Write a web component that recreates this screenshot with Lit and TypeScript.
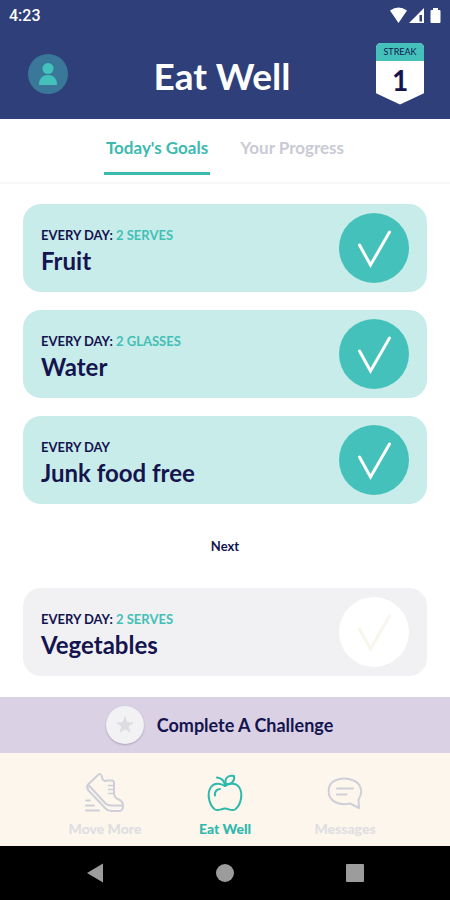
import { LitElement, html, css, svg, nothing } from "lit";
import { customElement, property, state } from "lit/decorators.js";
import { classMap } from "lit/directives/class-map.js";

interface Goal {
  id: string;
  name: string;
  amount?: string;
  done: boolean;
}

const shoeIcon = svg`
  <path d="M13.500 3.500 Q15.500 0.500 17.500 3.500 L18.500 7 Q20 10 23 8.500 L28 8.500 Q30 8.500 30 11 L30 22 Q31 26.500 35 27.500 Q39.500 29.500 39 35 Q38.500 39 35 39 L27.500 39 Q24 39 21.500 36.500 L4.500 18.500 Q2 15.500 4 12.500 Z"/>
  <path d="M4.500 13 L21 31 Q23.500 33.500 27.500 33.500 L38.500 33.500"/>
  <path d="M24.500 13.500h5M24.500 17.500h5M24.500 21.500h5" stroke-width="1.700"/>
  <path d="M2 28.500h4M2 33.500h8M2 38.500h13" stroke-width="1.800"/>`;

const appleIcon = svg`
  <path d="M21 14 C16 10.500 10 11 7 15 C2.500 21.500 5 33 11 37.500 C14.500 39.500 17.500 36.500 21 36.500 C24.500 36.500 27.500 39.500 31 37.500 C37 33 39.500 21.500 35 15 C32 11 26 10.500 21 14 Z"/>
  <path d="M21 14 C20.500 9 17.500 6 13 5.500"/>
  <path d="M21.500 12 C20.500 6 24 3 30 4 C31 9.500 27.500 12.500 21.500 12 Z"/>
  <path d="M11 23.500 C10.500 20 12.500 17.500 16 17"/>`;

const messageIcon = svg`
  <path d="M34.500 27.500 C39.500 20 37 11.500 29.500 8.500 C24 6 16.500 6 11 8.500 C2.500 12.500 2.500 25.500 11 30 C15.500 32.500 21 32.500 26 31.500 L35 36 Z"/>
  <path d="M13 16.500h16M13 22.500h9.500"/>`;

@customElement("goal-card")
export class GoalCard extends LitElement {
  @property({ attribute: false }) goal!: Goal;

  static styles = css`
    :host {
      display: block;
    }
    .card {
      display: flex;
      align-items: center;
      justify-content: space-between;
      height: 88px;
      box-sizing: border-box;
      padding: 0 18px;
      border-radius: 18px;
      background: #f1f1f3;
      color: #14144f;
      cursor: pointer;
    }
    .card.done {
      background: #c8ecea;
    }
    .text {
      display: flex;
      flex-direction: column;
      gap: 4px;
      padding-top: 5px;
    }
    .when {
      font-size: 13px;
      line-height: 16px;
      font-weight: 700;
    }
    .amount {
      color: #43c0b6;
    }
    .name {
      font-size: 24px;
      line-height: 28px;
      font-weight: 700;
    }
    .tick {
      display: grid;
      flex: none;
    }
    .tick > * {
      grid-area: 1 / 1;
    }
    .box {
      appearance: none;
      width: 70px;
      height: 70px;
      margin: 0;
      border-radius: 50%;
      background: #fff;
      cursor: pointer;
    }
    .box:checked {
      background: #45c1bc;
    }
    .mark {
      width: 70px;
      height: 70px;
      pointer-events: none;
      fill: none;
      stroke: #f7f5ec;
      stroke-width: 3;
      stroke-linecap: round;
    }
    .done .mark {
      stroke: #fff;
    }
  `;

  private toggle(e: Event) {
    this.goal = { ...this.goal, done: (e.target as HTMLInputElement).checked };
  }

  render() {
    const { id, name, amount, done } = this.goal;
    return html`
      <label class=${classMap({ card: true, done })} for=${id}>
        <span class="text">
          <span class="when"
            >EVERY DAY${amount ? html`: <span class="amount">${amount}</span>` : nothing}</span
          >
          <span class="name">${name}</span>
        </span>
        <span class="tick">
          <input class="box" type="checkbox" id=${id} .checked=${done} @change=${this.toggle} />
          <svg class="mark" viewBox="0 0 70 70" aria-hidden="true">
            <path d="M20.500 32 L31.500 52 L50.500 19" />
          </svg>
        </span>
      </label>
    `;
  }
}

@customElement("app-root")
export class AppRoot extends LitElement {
  @state() private tab = "Today's Goals";

  private done: Goal[] = [
    { id: "fruit", name: "Fruit", amount: "2 SERVES", done: true },
    { id: "water", name: "Water", amount: "2 GLASSES", done: true },
    { id: "junk", name: "Junk food free", done: true },
  ];

  private next: Goal[] = [
    { id: "vegetables", name: "Vegetables", amount: "2 SERVES", done: false },
  ];

  static styles = css`
    :host {
      display: flex;
      flex-direction: column;
      min-height: 100vh;
      background: #fff;
      color: #14144f;
      font-family: Lato, "Open Sans", sans-serif;
    }
    button {
      border: 0;
      margin: 0;
      padding: 0;
      background: none;
      color: inherit;
      font: inherit;
      cursor: pointer;
    }
    .top {
      background: #2e3f7a;
      color: #fff;
    }
    .status {
      display: flex;
      align-items: center;
      justify-content: space-between;
      height: 30px;
      padding: 0 7px 0 9px;
      font-family: Roboto, sans-serif;
      font-size: 16px;
      font-weight: 500;
    }
    .signals {
      width: 54px;
      height: 18px;
      fill: #fff;
    }
    .bar {
      display: grid;
      grid-template-columns: auto 1fr auto;
      align-items: center;
      height: 89px;
      padding: 0 26px 0 28px;
    }
    .profile {
      width: 40px;
      height: 40px;
      margin-bottom: 2px;
    }
    .profile svg {
      display: block;
    }
    .title {
      margin: 0;
      padding-top: 2px;
      text-align: center;
      font-size: 37px;
      line-height: 44px;
      font-weight: 700;
    }
    .streak {
      display: flex;
      flex-direction: column;
      width: 48px;
      height: 62px;
      margin-bottom: 2px;
      border-radius: 5px 5px 0 0;
      overflow: hidden;
      background: #fff;
      clip-path: polygon(0 0, 100% 0, 100% 82%, 50% 100%, 0 82%);
      color: #14144f;
      text-align: center;
    }
    .streak-label {
      background: #45c1bc;
      font-size: 9px;
      line-height: 18px;
      font-weight: 400;
    }
    .streak-count {
      font-size: 28px;
      line-height: 38px;
      font-weight: 700;
    }
    .tabs {
      display: flex;
      justify-content: center;
      gap: 28px;
      height: 63px;
      border-bottom: 2px solid #f8f8f9;
    }
    .tab {
      height: 56px;
      box-sizing: border-box;
      padding: 0 2px;
      border-bottom: 3px solid transparent;
      font-size: 17px;
      line-height: 57px;
      font-weight: 700;
      color: #c9cad3;
    }
    .tab.current {
      color: #3bbab0;
      border-color: #3bbab0;
    }
    .goals {
      display: flex;
      flex-direction: column;
      gap: 18px;
      padding: 20px 23px 21px;
      flex: 1;
    }
    .next {
      margin: 0;
      padding: 14px 0;
      text-align: center;
      font-size: 13px;
      line-height: 20px;
      font-weight: 700;
    }
    .challenge {
      display: flex;
      align-items: center;
      justify-content: center;
      gap: 13px;
      height: 56px;
      padding-right: 11px;
      background: #dad1e4;
      color: #14144f;
      font-size: 18px;
      font-weight: 700;
    }
    .badge {
      display: grid;
      place-items: center;
      width: 38px;
      height: 38px;
      border-radius: 50%;
      background: #f2f1f4;
      box-shadow: 0 1px 2px #a9a1b5;
    }
    .nav {
      display: grid;
      grid-template-columns: repeat(3, 120px);
      justify-content: center;
      height: 93px;
      background: #fcf6ec;
    }
    .item {
      display: flex;
      flex-direction: column;
      align-items: center;
      gap: 7px;
      padding-top: 19px;
      color: #cfcfda;
      font-size: 14px;
      line-height: 16px;
      font-weight: 900;
      text-decoration: none;
    }
    .item.faint span {
      color: #dfdee2;
    }
    .item.current {
      color: #2fb8ad;
    }
    .item svg {
      width: 42px;
      height: 42px;
      fill: none;
      stroke: currentColor;
      stroke-width: 2;
      stroke-linecap: round;
      stroke-linejoin: round;
    }
    .system {
      display: flex;
      justify-content: space-around;
      align-items: center;
      height: 54px;
      padding: 0 30px;
      background: #000;
    }
    .system svg {
      display: block;
      fill: #9c9c9c;
    }
  `;

  private tabButton(name: string) {
    const current = this.tab === name;
    return html`<button
      class=${classMap({ tab: true, current })}
      role="tab"
      aria-selected=${current}
      @click=${() => (this.tab = name)}
    >${name}</button>`;
  }

  private navItem(label: string, icon: unknown, current = false) {
    return html`<a
      class=${classMap({ item: true, current, faint: !current })}
      href="#"
      aria-current=${current ? "page" : nothing}
    >
      <svg viewBox="0 0 42 42" aria-hidden="true">${icon}</svg>
      <span>${label}</span>
    </a>`;
  }

  render() {
    return html`
      <header class="top">
        <div class="status">
          <span>4:23</span>
          <svg class="signals" viewBox="0 0 54 18" aria-hidden="true">
            <path d="M1 4.500 Q9.500 -1.500 18 4.500 L9.500 17 Z" />
            <path fill-rule="evenodd" d="M35 2 V17 H20 Z M30.500 9 V15.500 H33 V9 Z" />
            <path d="M44 2h5v2h1.500q1 0 1 1v11q0 1-1 1h-8q-1 0-1-1v-11q0-1 1-1h1.500z" />
          </svg>
        </div>
        <div class="bar">
          <button class="profile" aria-label="Profile">
            <svg width="40" height="40" viewBox="0 0 40 40">
              <circle cx="20" cy="20" r="20" fill="#397898" />
              <circle cx="20" cy="14.500" r="5.500" fill="#45c1bc" />
              <path d="M11 31 C11 24 15 21 20 21 C25 21 29 24 29 31 Z" fill="#45c1bc" />
            </svg>
          </button>
          <h1 class="title">Eat Well</h1>
          <div class="streak">
            <span class="streak-label">STREAK</span>
            <span class="streak-count">1</span>
          </div>
        </div>
      </header>
      <div class="tabs" role="tablist">
        ${this.tabButton("Today's Goals")}${this.tabButton("Your Progress")}
      </div>
      <main class="goals">
        ${this.done.map((g) => html`<goal-card .goal=${g}></goal-card>`)}
        <h2 class="next">Next</h2>
        ${this.next.map((g) => html`<goal-card .goal=${g}></goal-card>`)}
      </main>
      <button class="challenge">
        <span class="badge">
          <svg width="20" height="20" viewBox="0 0 20 20" aria-hidden="true">
            <path fill="#dddce0" d="M10 1 L12.300 7.200 L19 7.500 L13.700 11.600 L15.500 18 L10 14.300 L4.500 18 L6.300 11.600 L1 7.500 L7.700 7.200 Z" />
          </svg>
        </span>
        Complete A Challenge
      </button>
      <nav class="nav">
        ${this.navItem("Move More", shoeIcon)} ${this.navItem("Eat Well", appleIcon, true)}
        ${this.navItem("Messages", messageIcon)}
      </nav>
      <div class="system">
        <button aria-label="Back">
          <svg width="20" height="20" viewBox="0 0 20 20"><path d="M18 0.500 V19.500 L2 10 Z" /></svg>
        </button>
        <button aria-label="Home">
          <svg width="20" height="20" viewBox="0 0 20 20"><circle cx="10" cy="10" r="9" /></svg>
        </button>
        <button aria-label="Recent apps">
          <svg width="20" height="20" viewBox="0 0 20 20"><rect x="1" y="1" width="18" height="18" rx="1" /></svg>
        </button>
      </div>
    `;
  }
}
